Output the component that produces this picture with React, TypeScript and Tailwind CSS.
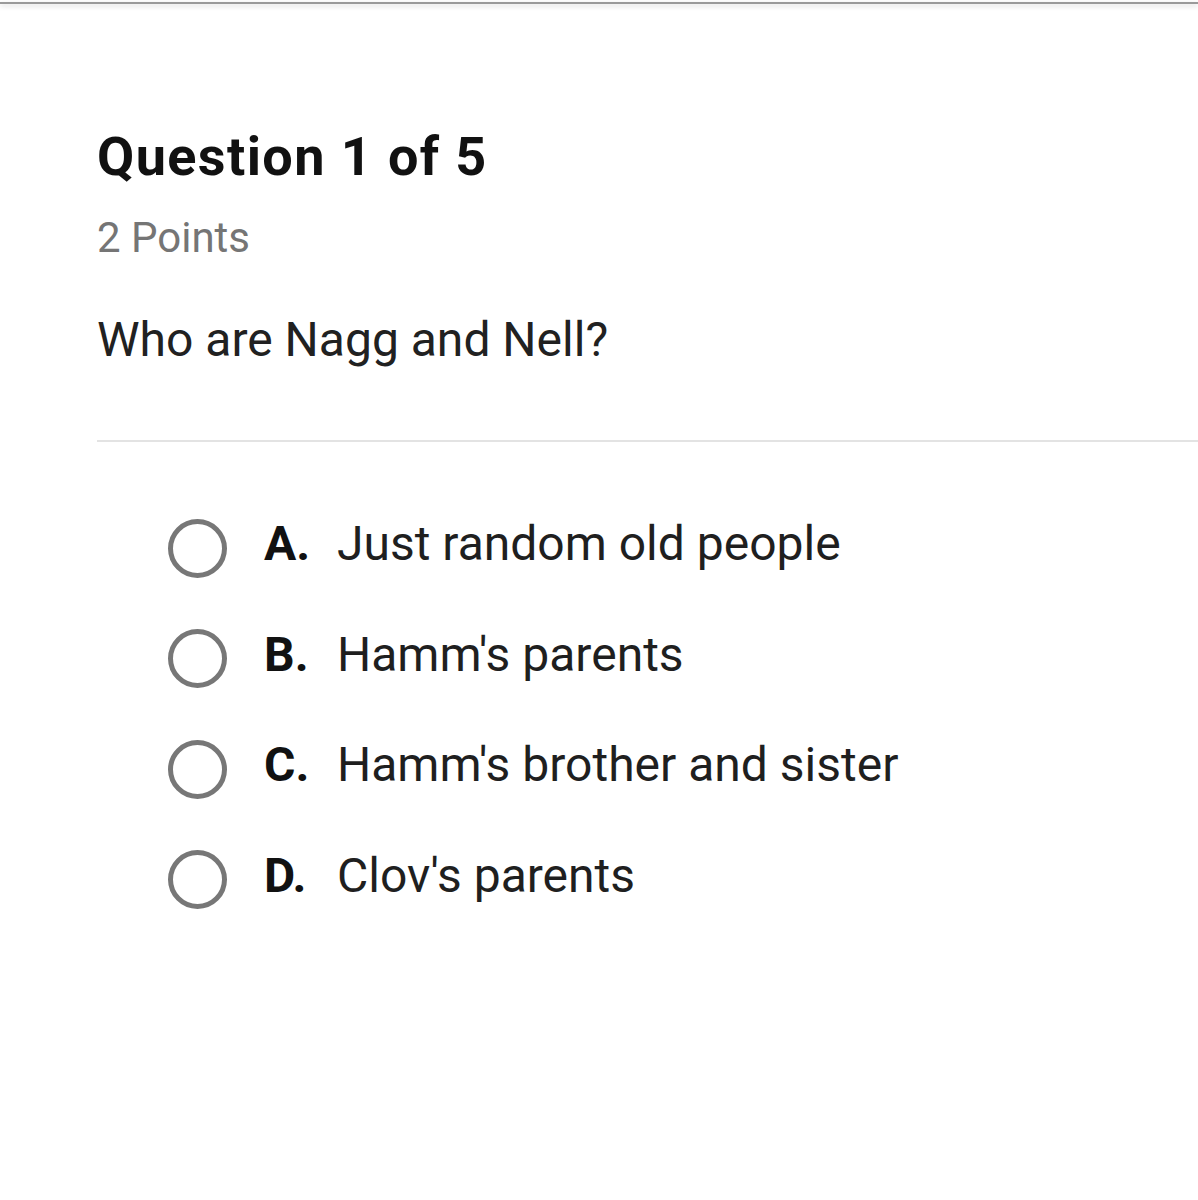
const options = [
  { key: "A", text: "Just random old people" },
  { key: "B", text: "Hamm's parents" },
  { key: "C", text: "Hamm's brother and sister" },
  { key: "D", text: "Clov's parents" },
];

export default function App() {
  return (
    <div className="w-[1198px] h-[1200px] bg-white overflow-hidden font-['Roboto',sans-serif]">
      {/* top edge */}
      <div className="h-[2px] mt-[2px] bg-[#9a9a9a] shadow-[0_2px_5px_rgba(0,0,0,0.18)]" />

      <div className="pl-[97px]">
        <h1 className="mt-[126px] text-[54px] leading-none font-bold text-[#111] tracking-[1.4px]">
          Question 1 of 5
        </h1>
        <p className="mt-[33px] text-[42px] leading-none text-[#757575]">2 Points</p>
        <p className="mt-[57px] text-[48px] leading-none text-[#212121]">
          Who are Nagg and Nell?
        </p>

        <div className="mt-[76px] h-[2px] bg-[#e3e3e3]" />

        <div className="mt-[51px] flex flex-col pl-[71px]">
          {options.map((o) => (
            <div key={o.key} className="flex items-center h-[110.5px]">
              <span className="w-[59px] h-[59px] rounded-full border-[5px] border-[#777] shrink-0" />
              <div className="flex items-center pb-[8px] pl-[37px] text-[48px] leading-none text-[#1f1f1f]">
                <span className="w-[73px] font-bold text-[#111]">{o.key}.</span>
                <span>{o.text}</span>
              </div>
            </div>
          ))}
        </div>
      </div>
    </div>
  );
}
